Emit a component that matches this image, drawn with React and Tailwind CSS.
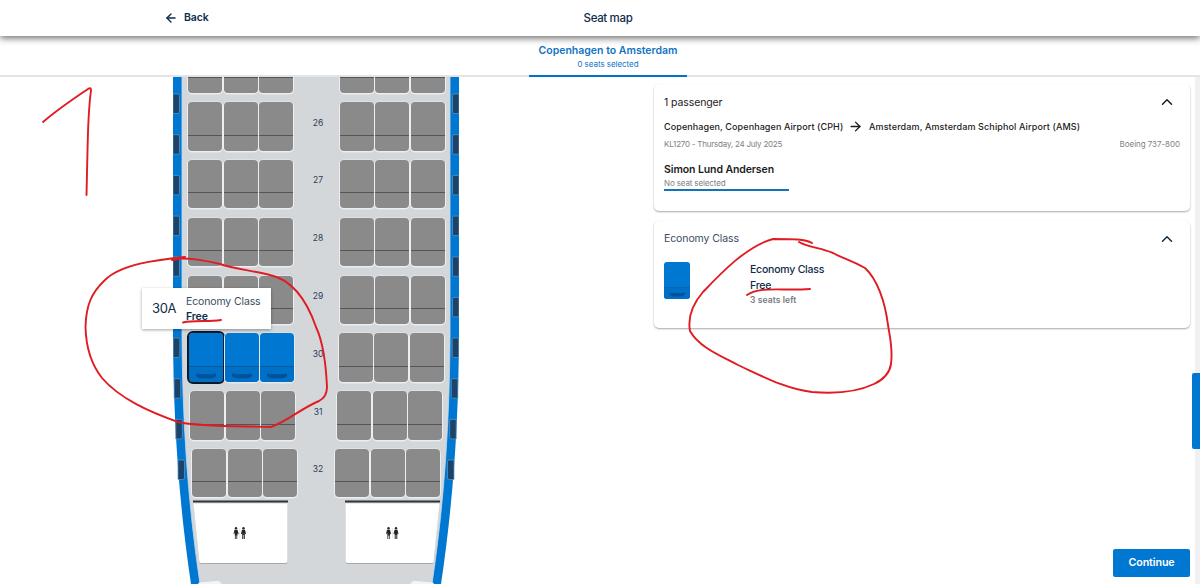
import { ArrowLeft, ArrowRight, ChevronUp } from "lucide-react";

const rows = [
  { number: 25, layout: "pl-[15px] pr-[14.5px]", hideLabel: true },
  { number: 26, layout: "pl-[15px] pr-[14.5px]" },
  { number: 27, layout: "pl-[15px] pr-[14.5px]" },
  { number: 28, layout: "pl-[15px] pr-[14.5px]" },
  { number: 29, layout: "pl-[15px] pr-[14.5px]" },
  { number: 30, layout: "pl-[16px] pr-[15.5px]", free: true },
  { number: 31, layout: "pl-[17px] pr-[17px]" },
  { number: 32, layout: "pl-[19px] pr-[19px]" },
];

// distance from the top of the map and the inward shift of each window
const windows = [
  [17, 0], [57.7, 0], [98.4, 0], [139.1, 0], [179.8, 0],
  [220.4, 0], [261, 0.3], [301.7, 1.2], [342.4, 2.8], [383, 5],
];

function Seat({ free, selected }) {
  if (free) {
    return (
      <div className={`relative flex h-[48.5px] w-[34px] flex-col justify-end overflow-hidden rounded-[4px] bg-[#0078d2] ${selected ? "outline-2 outline-offset-[-0.5px] outline-[#0b1a2b]" : "shadow-[0_0.5px_0_1px_#e6eaec]"}`}>
        <div className="flex h-[16px] items-end justify-center border-t border-[#0a5a9c] bg-[#0070c6] pb-[3px]">
          <SeatPocket className="h-[6px] w-[20px]" />
        </div>
      </div>
    );
  }
  return (
    <div className="flex h-[48.5px] w-[34px] flex-col justify-end rounded-[4px] bg-[#8a8a8a] shadow-[0_0.5px_0_1px_#eceeef]">
      <div className="h-[16px] border-t border-[#555]" />
    </div>
  );
}

function SeatPocket({ className }) {
  return (
    <svg className={className} viewBox="0 0 20 6">
      <path d="M0 0.5Q10 2 20 0.5V3Q18 5.5 14 5.5H6Q2 5.5 0 3Z" fill="#00539a" />
    </svg>
  );
}

function SeatRow({ layout, free }) {
  return (
    <div className={`flex h-[57.8px] shrink-0 items-start justify-between ${layout}`}>
      <div className="flex gap-[1.5px]">
        <Seat free={free} selected={free} />
        <Seat free={free} />
        <Seat free={free} />
      </div>
      <div className="flex gap-[1.5px]">
        <Seat />
        <Seat />
        <Seat />
      </div>
    </div>
  );
}

function Hull() {
  return (
    <svg className="absolute inset-0 h-[507px] w-[286px]" viewBox="0 0 286 507">
      <path d="M0 0V260C0.5 340 5 420 18 507H268C281 420 285.5 340 286 260V0Z" fill="#0078d2" />
      <path d="M9 0V260C9.5 340 14 420 27 507H259C272 420 276.5 340 277 260V0Z" fill="#d3d7da" stroke="#c3dbee" strokeWidth="0.8" />
      {windows.map(([y, shift]) => (
        <g key={y} fill="#1d4369" stroke="#5a9bd0" strokeWidth="0.7">
          <path d={`M${shift} ${y}h5q1.5 0 1.5 1.5v16.5q0 1.5-1.5 1.5h-5z`} />
          <path d={`M${286 - shift} ${y}h-5q-1.5 0-1.5 1.5v16.5q0 1.5 1.5 1.5h5z`} />
        </g>
      ))}
      <path d="M25 507l1-1.5 18-1.5q4 0 4.5 3zM261 507l-1-1.5-18-1.5q-4 0-4.5 3z" fill="#f3f4f5" />
    </svg>
  );
}

function Lavatory({ flip }) {
  return (
    <svg className="h-[66px] w-[95px] overflow-visible" viewBox="0 0 95 66">
      <g transform={flip ? "translate(95 0) scale(-1 1)" : undefined}>
        <path d="M0 0.5H95V2.5H0Z" fill="#303336" />
        <path d="M1 5H94.5V61.5Q94.5 64 92.5 64H8.5Q6.5 64 6.3 62Z" fill="#a5a9ac" />
        <path d="M0.5 3.5H94.5V61Q94.5 63 92.5 63H8.5Q6.5 63 6.3 61.5Z" fill="#fff" />
      </g>
      <g fill="#252525" transform={flip ? "translate(41 27)" : "translate(40.5 27)"}>
        <circle cx="2.5" cy="1.2" r="1.2" />
        <path d="M1 2.8h3L5.2 7l-0.7 0.3L4 6v2.5h-0.3V12h-0.8V8.5h-0.7V12h-0.8V8.5L1.2 5.5 0.5 7.2 0 7Z" />
        <circle cx="10" cy="1.2" r="1.2" />
        <path d="M8.5 2.8h3L12.5 7l-0.7 0.3L11.3 6V12h-1V8h-0.6v4h-1V6L8.2 7.3 7.5 7Z" />
        <path d="M6.2 0.5h0.4v11h-0.4z" opacity="0.25" />
      </g>
    </svg>
  );
}

function SeatTooltip() {
  return (
    <div className="absolute top-[211px] left-[-31px] z-10 flex h-[41px] w-[129px] items-center gap-[10px] bg-white pl-[10px] shadow-[0_1px_3px_rgba(0,0,0,0.35)]">
      <span className="w-[24px] text-[13px] tracking-[-0.4px]">30A</span>
      <div className="text-[10.5px] leading-[15px] tracking-[-0.13px] whitespace-nowrap">
        <div className="text-[#3a4b60]">Economy Class</div>
        <div className="font-semibold">Free</div>
      </div>
    </div>
  );
}

function SeatMap() {
  return (
    <div className="relative ml-[173px] h-[507px] w-[286px] shrink-0">
      <Hull />
      <div className="relative h-[507px] overflow-hidden">
        <div className="mt-[-32.7px] flex">
          <div className="flex w-[286px] shrink-0 flex-col">
            {rows.map((row) => (
              <SeatRow key={row.number} {...row} />
            ))}
          </div>
          <div className="ml-[-147px] flex w-[12px] shrink-0 flex-col text-[8.5px] text-[#2c4058]">
            {rows.map((row) => (
              <div key={row.number} className="flex h-[57.8px] items-start justify-center pt-[14.5px] leading-[13px]">
                {!row.hideLabel && row.number}
              </div>
            ))}
          </div>
        </div>
        <div className="mt-[-6.3px] flex justify-between pr-[19.5px] pl-[19.5px]">
          <Lavatory />
          <Lavatory flip />
        </div>
      </div>
      <SeatTooltip />
    </div>
  );
}

function PassengerCard() {
  return (
    <section className="h-[127px] rounded-[5px] bg-white px-[10px] pt-[9px] text-[#1c1c1c] shadow-[0_1px_2px_rgba(0,0,0,0.35)]">
      <div className="flex h-[18px] items-center justify-between pr-[4px]">
        <h2 className="pt-px text-[10.5px] tracking-[-0.1px]">1 passenger</h2>
        <ChevronUp className="size-[18px]" strokeWidth={2} />
      </div>
      <div className="mt-[8px] flex h-[15px] items-center text-[9px] font-medium tracking-[0.1px] whitespace-nowrap">
        <span className="w-[179px]">Copenhagen, Copenhagen Airport (CPH)</span>
        <ArrowRight className="mx-[5px] size-[15px]" strokeWidth={2.2} />
        <span className="pl-px tracking-[0.13px]">Amsterdam, Amsterdam Schiphol Airport (AMS)</span>
      </div>
      <div className="mt-[3px] flex h-[13px] items-center justify-between text-[8px] text-[#808080]">
        <span className="tracking-[-0.22px]">KL1270 - Thursday, 24 July 2025</span>
        <span className="tracking-[-0.05px]">Boeing 737-800</span>
      </div>
      <div className="mt-[12px] w-[125px] border-b-2 border-[#1273ba]">
        <div className="h-[15px] text-[10.5px] leading-[15px] font-semibold tracking-[-0.1px]">Simon Lund Andersen</div>
        <div className="h-[12px] text-[8px] leading-[12px] tracking-[-0.13px] text-[#808080]">No seat selected</div>
      </div>
    </section>
  );
}

function ClassCard() {
  return (
    <section className="mt-[10px] h-[107px] rounded-[5px] bg-white px-[10px] pt-[9px] shadow-[0_1px_2px_rgba(0,0,0,0.35)]">
      <div className="flex h-[18px] items-center justify-between pr-[4px]">
        <h2 className="text-[10.5px] tracking-[-0.1px] text-[#3a4b60]">Economy Class</h2>
        <ChevronUp className="size-[18px]" strokeWidth={2} />
      </div>
      <div className="mt-[14px] flex">
        <div className="flex h-[37px] w-[26px] flex-col justify-end rounded-[3px] bg-[#0078d2]">
          <div className="flex h-[12px] items-end justify-center rounded-b-[3px] border-t border-[#0a66b3] bg-[#0070c6] pb-[2px]">
            <SeatPocket className="h-[5px] w-[16px]" />
          </div>
        </div>
        <div className="ml-[60px] text-[10.5px] leading-[15.5px] font-medium tracking-[-0.22px]">
          <div>Economy Class</div>
          <div>Free</div>
          <div className="text-[8.5px] font-semibold tracking-[0.1px] text-[#74797e]">3 seats left</div>
        </div>
      </div>
    </section>
  );
}

function Annotations() {
  return (
    <svg
      className="pointer-events-none absolute inset-0 z-20 h-[584px] w-[1200px]"
      viewBox="0 0 1200 584"
      fill="none"
      stroke="#e01b22"
      strokeWidth="1.9"
      strokeLinecap="round"
      strokeLinejoin="round"
    >
      <path d="M43 122C57 110 73 99 88 89Q91 87 91 90C88 113 88 132 87.5 151L86.5 195" />
      <path d="M172 260C178 260 181 257 185 257C156 260 121 264 105 280C91 293 86 306 85.5 327C86 348 91 364 102 378C120 399 150 412 178 422C201 427 240 426 271 427C288 421 300 409 319 401Q327 397 327 387C326 365 324 344 316 327C307 301 293 280 270 275C250 270 235 269 220 264C207 261 190 257 172 259" />
      <path d="M183 322.5C194 320 208 322 221 320" />
      <path d="M812 243C805 239 794 239 773 239C747 246 722 272 703 292C691 306 688 320 690 331C699 347 719 355 738 365C764 377 786 389 812 392C835 394 855 393 874 384Q889 377 891 364C893 348 890 338 888 325C885 301 877 279 865 268C851 260 844 259 833 253C821 248 807 247 799 242" />
      <path d="M747 295C761 286 780 291 810 289" />
    </svg>
  );
}

export default function App() {
  return (
    <div className="relative h-[584px] w-[1200px] overflow-hidden bg-white font-['Inter',sans-serif] text-[#0d2d4a]">
      <header className="relative z-10 grid h-[36px] grid-cols-3 items-center bg-white shadow-[0_2px_7px_rgba(0,0,0,0.6)]">
        <button type="button" className="ml-[164px] flex items-center gap-[6px] pb-px text-[10.5px] font-semibold tracking-[-0.1px]">
          <ArrowLeft className="size-[14px]" strokeWidth={2.3} />
          Back
        </button>
        <h1 className="pt-px pl-[16px] text-center text-[11.5px] font-medium tracking-[-0.35px]">Seat map</h1>
      </header>
      <nav className="flex h-[41px] justify-center border-b-2 border-[#e3e4e5] pl-[16px]">
        <div className="h-[41px] w-[158px] border-b-2 border-[#0072c3] pt-[8px] text-center whitespace-nowrap text-[#1273c4]">
          <div className="text-[10.5px] leading-[14px] font-semibold">Copenhagen to Amsterdam</div>
          <div className="text-[8px] leading-[13px] tracking-[-0.05px]">0 seats selected</div>
        </div>
      </nav>
      <main className="flex h-[507px]">
        <SeatMap />
        <div className="ml-[195px] flex w-[536px] shrink-0 flex-col pt-[7px]">
          <PassengerCard />
          <ClassCard />
          <button type="button" className="mt-auto mb-[7px] h-[28px] w-[77px] self-end rounded-[2px] bg-[#0078d2] text-[10.7px] font-semibold tracking-[-0.1px] text-white">
            Continue
          </button>
        </div>
        <div className="ml-[2px] flex w-[8px] shrink-0 flex-col bg-[linear-gradient(90deg,#fff_3px,#f0f0f0_3px)] pt-[296px]">
          <div className="h-[76px] rounded-l-[2px] bg-[#0078d2]" />
        </div>
      </main>
      <Annotations />
    </div>
  );
}
